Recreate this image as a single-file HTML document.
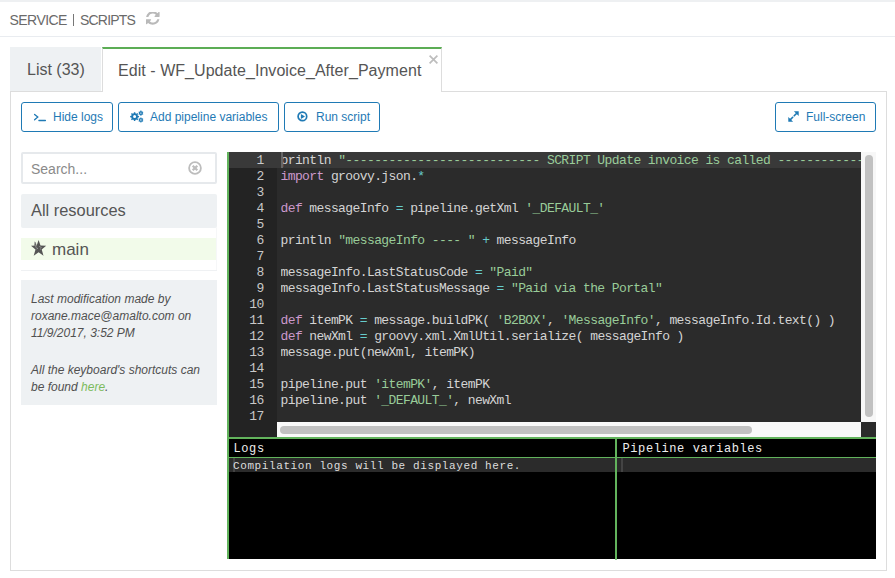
<!DOCTYPE html>
<html><head><meta charset="utf-8">
<style>
*{box-sizing:border-box;margin:0;padding:0}
html,body{width:895px;height:578px;overflow:hidden;background:#fff;font-family:"Liberation Sans",sans-serif;color:#555}
.abs{position:absolute}
.t{position:absolute;white-space:nowrap}
.btn{position:absolute;top:102px;height:30px;border:1px solid #1f7ab5;border-radius:3px;background:#fff}
.bt{position:absolute;top:109px;font-size:12px;line-height:16px;color:#1f7ab5;white-space:nowrap}
.code{position:absolute;font-family:"Liberation Mono",monospace;font-size:13px;letter-spacing:-0.6px;line-height:16px;white-space:pre;color:#d4d4d4}
.g{position:absolute;background:#62b35c}
.mono{position:absolute;font-family:"Liberation Mono",monospace;white-space:pre;color:#eee}
.kw{color:#cc99cc}.st{color:#99cc99}.op{color:#66cccc}
</style></head><body>
<div class="abs" style="left:0;top:0;width:895px;height:2px;background:#eef0f2"></div>
<div class="t" style="left:9.5px;top:12px;font-size:14px;letter-spacing:-0.55px;line-height:16px;color:#6a6a6a">SERVICE</div><div class="abs" style="left:73px;top:14px;width:1.2px;height:12px;background:#777"></div><div class="t" style="left:80px;top:12px;font-size:14px;line-height:16px;color:#6a6a6a;letter-spacing:-0.8px">SCRIPTS</div>
<svg class="abs" style="left:146px;top:12.3px" width="13.6" height="13.8" viewBox="0 128 1536 1472"><path fill="#b9b9b9" d="M1511 928q0 5-1 7-64 268-268 434.5t-478 166.5q-146 0-282.5-55t-243.5-157l-129 129q-19 19-45 19t-45-19-19-45v-448q0-26 19-45t45-19h448q26 0 45 19t19 45-19 45l-137 137q71 66 161 102t187 36q134 0 250-65t186-179q11-17 53-117 8-23 30-23h192q13 0 22.5 9.5t9.5 22.5zm25-800v448q0 26-19 45t-45 19h-448q-26 0-45-19t-19-45 19-45l138-138q-148-137-349-137-134 0-250 65t-186 179q-11 17-53 117-8 23-30 23h-199q-13 0-22.5-9.5t-9.5-22.5v-7q65-268 270-434.5t480-166.5q146 0 284 55.5t245 156.5l130-129q19-19 45-19t45 19 19 45z"/></svg>
<div class="abs" style="left:0;top:36px;width:895px;height:1px;background:#e9ecf0"></div>

<div class="abs" style="left:10px;top:91px;width:877px;height:480px;border:1px solid #ddd"></div>
<div class="abs" style="left:10px;top:47px;width:91px;height:44px;background:#eef1f3"></div>
<div class="t" style="left:27px;top:60px;font-size:16px;line-height:20px;color:#555">List (33)</div>
<div class="abs" style="left:102px;top:47px;width:340px;height:45px;background:#fff;border-left:1px solid #ddd;border-right:1px solid #ddd;border-top:2px solid #5cad55"></div>
<div class="t" style="left:118px;top:61px;font-size:16px;letter-spacing:0.05px;line-height:20px;color:#555">Edit - WF_Update_Invoice_After_Payment</div>
<svg class="abs" style="left:429px;top:55px" width="9" height="9" viewBox="0 0 9 9"><path d="M0.6 0.6 L8.4 8.4 M8.4 0.6 L0.6 8.4" stroke="#bdbdbd" stroke-width="1.7"/></svg>

<div class="btn" style="left:21px;width:92px"></div>
<svg class="abs" style="left:33px;top:112px" width="14" height="10" viewBox="0 0 14 10"><path d="M1.6 2.4 L4.8 5.1 L1.6 7.8" fill="none" stroke="#1f7ab5" stroke-width="1.3" stroke-linecap="round"/><path d="M5.9 8.5 L12.4 8.5" stroke="#1f7ab5" stroke-width="1.3" stroke-linecap="round"/></svg>
<div class="bt" style="left:53px">Hide logs</div>
<div class="btn" style="left:118px;width:161px"></div>
<svg class="abs" style="left:127px;top:108px" width="20" height="18" viewBox="0 0 20 18"><path fill="#1f7ab5" fill-rule="evenodd" d="M6.81 5.29 L6.90 4.15 L8.30 4.15 L8.39 5.29 L9.38 5.70 L10.25 4.96 L11.24 5.95 L10.50 6.82 L10.91 7.81 L12.05 7.90 L12.05 9.30 L10.91 9.39 L10.50 10.38 L11.24 11.25 L10.25 12.24 L9.38 11.50 L8.39 11.91 L8.30 13.05 L6.90 13.05 L6.81 11.91 L5.82 11.50 L4.95 12.24 L3.96 11.25 L4.70 10.38 L4.29 9.39 L3.15 9.30 L3.15 7.90 L4.29 7.81 L4.70 6.82 L3.96 5.95 L4.95 4.96 L5.82 5.70 Z M6.10 8.60 a1.50 1.50 0 1 0 3.00 0 a1.50 1.50 0 1 0 -3.00 0 Z M13.31 3.29 L13.40 2.55 L14.40 2.55 L14.49 3.29 L15.17 3.69 L15.86 3.39 L16.36 4.25 L15.76 4.71 L15.76 5.49 L16.36 5.95 L15.86 6.81 L15.17 6.51 L14.49 6.91 L14.40 7.65 L13.40 7.65 L13.31 6.91 L12.63 6.51 L11.94 6.81 L11.44 5.95 L12.04 5.49 L12.04 4.71 L11.44 4.25 L11.94 3.39 L12.63 3.69 Z M13.20 5.10 a0.70 0.70 0 1 0 1.40 0 a0.70 0.70 0 1 0 -1.40 0 Z M13.31 10.19 L13.40 9.45 L14.40 9.45 L14.49 10.19 L15.17 10.59 L15.86 10.29 L16.36 11.15 L15.76 11.61 L15.76 12.39 L16.36 12.85 L15.86 13.71 L15.17 13.41 L14.49 13.81 L14.40 14.55 L13.40 14.55 L13.31 13.81 L12.63 13.41 L11.94 13.71 L11.44 12.85 L12.04 12.39 L12.04 11.61 L11.44 11.15 L11.94 10.29 L12.63 10.59 Z M13.20 12.00 a0.70 0.70 0 1 0 1.40 0 a0.70 0.70 0 1 0 -1.40 0 Z"/></svg>
<div class="bt" style="left:150px">Add pipeline variables</div>
<div class="btn" style="left:284px;width:96px"></div>
<svg class="abs" style="left:297px;top:111px" width="11" height="11" viewBox="0 0 11 11"><circle cx="5.4" cy="5.4" r="4.3" fill="none" stroke="#1f7ab5" stroke-width="1.7"/><path d="M3.9 2.9 L8 5.4 L3.9 7.9 Z" fill="#1f7ab5"/></svg>
<div class="bt" style="left:316px">Run script</div>
<div class="btn" style="left:775px;width:101px"></div>
<svg class="abs" style="left:788px;top:111px" width="11" height="11" viewBox="0 0 11 11"><path d="M6.2 4.8 L9 2 M1.9 9.1 L4.7 6.3" stroke="#1f7ab5" stroke-width="1.6" stroke-linecap="round"/><path d="M5.9 0.3 L10.7 0.3 L10.7 5.1 Z M0.3 5.9 L0.3 10.7 L5.1 10.7 Z" fill="#1f7ab5"/></svg>
<div class="bt" style="left:806px">Full-screen</div>

<div class="abs" style="left:21px;top:152px;width:196px;height:32px;border:2px solid #e6e9ec;border-radius:2px"></div>
<div class="t" style="left:31px;top:161px;font-size:14px;line-height:16px;color:#8a8a8a">Search...</div>
<svg class="abs" style="left:188px;top:161px" width="14" height="14" viewBox="0 0 14 14"><circle cx="7" cy="7" r="5.9" fill="none" stroke="#bdbdbd" stroke-width="1.8"/><path d="M4.7 4.7 L9.3 9.3 M9.3 4.7 L4.7 9.3" stroke="#bdbdbd" stroke-width="2.2"/></svg>
<div class="abs" style="left:21px;top:194px;width:196px;height:34px;background:#eef1f3;border-radius:2px"></div>
<div class="t" style="left:31px;top:201px;font-size:16.4px;line-height:18px;color:#555">All resources</div>
<div class="abs" style="left:21px;top:238px;width:196px;height:22px;background:#f2fbea"></div>
<svg class="abs" style="left:30px;top:239px" width="17" height="18" viewBox="0 0 17 18"><path d="M8.6 1 L10.5 6.6 L16.2 6.8 L11.7 10.4 L13.5 16.8 L8.6 13.2 L3.7 16.8 L5.5 10.4 L1 6.8 L6.7 6.6 Z" fill="#555"/><path d="M5 7.6 L7.2 8.4 M9.2 7.4 L11.6 8.6 M6.4 10 L8 9.3 M10 9.6 L11 10.4 M5.2 3.2 L6.2 6.4" stroke="#9a9a9a" stroke-width="0.9"/><path d="M4.8 2.2 L6.6 6.6 L4.2 6.7 Z" fill="#666"/></svg>
<div class="t" style="left:52px;top:241px;font-size:17px;line-height:18px;color:#555">main</div>
<div class="abs" style="left:21px;top:270px;width:196px;height:1px;background:#eff1f3"></div><div class="abs" style="left:216px;top:227px;width:1px;height:43px;background:#f6f7f8"></div>
<div class="abs" style="left:21px;top:280px;width:196px;height:125px;background:#eef1f3"></div>
<div class="t" style="left:31px;top:290.5px;font-size:12px;line-height:17px;font-style:italic;color:#505050">Last modification made by<br>roxane.mace@amalto.com on<br>11/9/2017, 3:52 PM</div>
<div class="t" style="left:31px;top:361.5px;font-size:12px;line-height:17px;font-style:italic;color:#505050">All the keyboard's shortcuts can<br>be found <span style="color:#7cbb5c">here</span>.</div>

<div class="abs" style="left:227px;top:152px;width:649px;height:285px;background:#2b2b2b"></div>
<div class="g" style="left:227px;top:152px;width:2px;height:285px"></div>
<div class="abs" style="left:229px;top:152px;width:48px;height:285px;background:#232323"></div>
<div class="abs" style="left:229px;top:152px;width:632px;height:16px;background:#393939"></div>
<div class="code" style="left:280.5px;top:153px;width:580.5px;height:269px;overflow:hidden">println <span class="st">"--------------------------- SCRIPT Update invoice is called --------------------------"</span>
<span class="kw">import</span> groovy.json.<span class="op">*</span>

<span class="kw">def</span> messageInfo <span class="op">=</span> pipeline.getXml <span class="st">'_DEFAULT_'</span>

println <span class="st">"messageInfo ---- "</span> <span class="op">+</span> messageInfo

messageInfo.LastStatusCode <span class="op">=</span> <span class="st">"Paid"</span>
messageInfo.LastStatusMessage <span class="op">=</span> <span class="st">"Paid via the Portal"</span>

<span class="kw">def</span> itemPK <span class="op">=</span> message.buildPK( <span class="st">'B2BOX'</span>, <span class="st">'MessageInfo'</span>, messageInfo.Id.text() )
<span class="kw">def</span> newXml <span class="op">=</span> groovy.xml.XmlUtil.serialize( messageInfo )
message.put(newXml, itemPK)

pipeline.put <span class="st">'itemPK'</span>, itemPK
pipeline.put <span class="st">'_DEFAULT_'</span>, newXml
</div>
<div class="code" style="left:229px;top:153px;width:34.6px;text-align:right;color:#c8c8c8">1
2
3
4
5
6
7
8
9
10
11
12
13
14
15
16
17</div>
<div class="abs" style="left:281px;top:152px;width:1.6px;height:16px;background:#666"></div>
<div class="abs" style="left:861px;top:152px;width:15px;height:270px;background:#f7f7f7"></div>
<div class="abs" style="left:865px;top:155px;width:8px;height:262px;background:#c1c1c1;border-radius:4px"></div>
<div class="abs" style="left:277px;top:422px;width:584px;height:15px;background:#f9f9f9"></div>
<div class="abs" style="left:280px;top:426px;width:472px;height:8px;background:#c1c1c1;border-radius:4px"></div>
<div class="abs" style="left:861px;top:422px;width:15px;height:15px;background:#2b2b2b"></div>

<div class="abs" style="left:227px;top:437px;width:649px;height:122px;background:#000"></div>
<div class="g" style="left:227px;top:437px;width:649px;height:2px"></div>
<div class="g" style="left:227px;top:437px;width:2px;height:122px"></div>
<div class="g" style="left:229px;top:457px;width:647px;height:1px"></div>
<div class="g" style="left:615px;top:437px;width:2px;height:123px;border-radius:0 0 1px 1px"></div>
<div class="abs" style="left:229px;top:458px;width:386px;height:14px;background:#2b2b2b"></div>
<div class="abs" style="left:617px;top:458px;width:259px;height:14px;background:#2b2b2b"></div>
<div class="abs" style="left:233px;top:458px;width:2px;height:14px;background:#444"></div>
<div class="abs" style="left:621px;top:458px;width:2px;height:14px;background:#444"></div>
<div class="mono" style="left:233.5px;top:441px;font-size:12px;letter-spacing:0.6px;line-height:16px">Logs</div>
<div class="mono" style="left:622.5px;top:441px;font-size:12px;letter-spacing:0.6px;line-height:16px">Pipeline variables</div>
<div class="mono" style="left:233px;top:459px;font-size:11px;letter-spacing:0.6px;line-height:14px;color:#ddd">Compilation logs will be displayed here.</div>
</body></html>
